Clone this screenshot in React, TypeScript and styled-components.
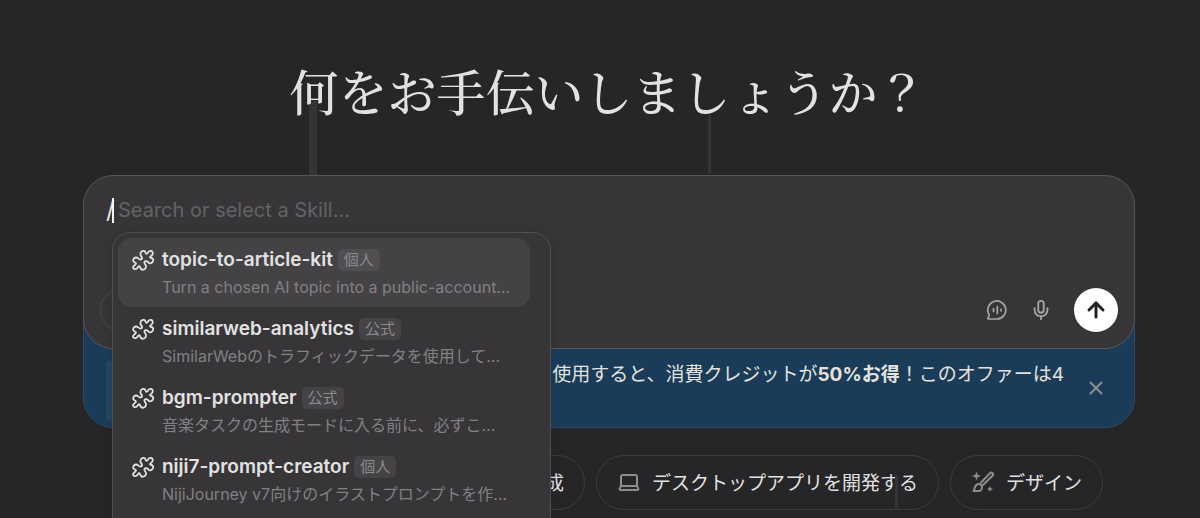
import React from "react";
import styled, { createGlobalStyle } from "styled-components";
import { ArrowUp, Laptop, Mic, X } from "lucide-react";

const Global = createGlobalStyle`
  * { box-sizing: border-box; }
  html, body { margin: 0; background: #262628; }
  body {
    color: #e2e2e2;
    font-family: Inter, "Noto Sans CJK JP", sans-serif;
  }
  button, input { font: inherit; color: inherit; }
`;

const Page = styled.main`
  position: relative;
  height: 100vh;
  overflow: hidden;
  padding: 60px 65px 0 83px;
`;

const Streak = styled.span<{ $left: number; $top: number; $width: number; $height: number }>`
  position: absolute;
  left: ${(p) => p.$left}px;
  top: ${(p) => p.$top}px;
  width: ${(p) => p.$width}px;
  height: ${(p) => p.$height}px;
  background: #343436;
`;

const Title = styled.h1`
  position: relative;
  margin: 0;
  height: 115px;
  padding-right: 2px;
  font: 500 49px/60px "Noto Serif CJK JP", "Noto Serif JP", "Noto Sans CJK JP", serif;
  text-align: center;
  white-space: nowrap;
`;

const Composer = styled.form`
  position: relative;
  z-index: 2;
  height: 174px;
  padding: 21px 16px 16px 22px;
  display: flex;
  flex-direction: column;
  justify-content: space-between;
  border: 1px solid #565658;
  border-radius: 30px;
  background: #373538;
`;

const InputRow = styled.label`
  display: flex;
  align-items: center;
  height: 26px;
  font-size: 20px;
`;

const Slash = styled.span`
  width: 6px;
  font-size: 24px;
  line-height: 26px;
`;

const Caret = styled.span`
  width: 2px;
  height: 25px;
  margin-right: 4px;
  background: #f4f4f4;
`;

const SkillInput = styled.input`
  flex: 1;
  min-width: 0;
  padding: 0;
  border: 0;
  outline: 0;
  background: transparent;
  &::placeholder { color: #636365; opacity: 1; }
`;

const Actions = styled.div`
  display: flex;
  align-items: center;
  gap: 20px;
`;

const AddButton = styled.button`
  width: 44px;
  height: 44px;
  margin: 0 auto 0 -6px;
  border: 1px solid #4a4a4c;
  border-radius: 50%;
  background: transparent;
`;

const IconButton = styled.button`
  display: grid;
  place-items: center;
  width: 24px;
  height: 24px;
  padding: 0;
  border: 0;
  background: transparent;
  color: #a5a5a5;
`;

const SendButton = styled(IconButton)`
  width: 44px;
  height: 44px;
  margin-left: 1px;
  border-radius: 50%;
  background: #fff;
  color: #242426;
`;

const Banner = styled.aside`
  display: flex;
  align-items: flex-start;
  height: 109px;
  margin-top: -30px;
  padding: 41px 29px 0 22px;
  border: 1px solid #2c4a60;
  border-radius: 0 0 30px 30px;
  background: #1b3c58;
  font-size: 19px;
  line-height: 27px;
`;

const BannerArt = styled.span`
  width: 60px;
  height: 60px;
  margin-right: auto;
  border-radius: 4px;
  background: #264660;
`;

const BannerText = styled.p`
  margin: 0 21px 0 0;
  white-space: nowrap;
  color: #e4e2de;
`;

const CloseButton = styled(IconButton)`
  width: 20px;
  margin-top: 15px;
  color: #8f9294;
`;

const Chips = styled.nav`
  display: flex;
  justify-content: flex-end;
  gap: 11px;
  padding: 27px 32px 0 0;
`;

const Chip = styled.button<{ $wide?: boolean }>`
  display: flex;
  align-items: center;
  justify-content: flex-end;
  gap: 11px;
  width: ${(p) => (p.$wide ? "469px" : "auto")};
  height: 55px;
  padding: 0 20px 2px;
  border: 1px solid #3d3d3f;
  border-radius: 28px;
  background: transparent;
  font-size: 19px;
  white-space: nowrap;
  svg { color: #8d8d8f; }
`;

const Menu = styled.ul`
  position: absolute;
  z-index: 3;
  top: 232px;
  bottom: -20px;
  left: 112px;
  width: 439px;
  margin: 0;
  padding: 5px 20px 0 5px;
  list-style: none;
  border: 1px solid #505052;
  border-radius: 18px;
  background: #373538;
  box-shadow: 0 0 12px rgba(0, 0, 0, 0.12);
`;

const Skill = styled.button<{ $active?: boolean }>`
  display: grid;
  grid-template-columns: 22px 1fr;
  grid-template-rows: 28px 26px;
  align-content: start;
  column-gap: 8px;
  align-items: center;
  width: 100%;
  height: 69px;
  padding: 8px 11px 0 14px;
  border: 0;
  border-radius: 14px;
  background: ${(p) => (p.$active ? "#444245" : "transparent")};
  text-align: left;
`;

const SkillHead = styled.span`
  display: flex;
  align-items: center;
  gap: 5px;
  font-size: 19px;
  font-weight: 600;
  line-height: 28px;
`;

const Tag = styled.span<{ $active?: boolean }>`
  padding: 0 6px;
  border-radius: 5px;
  background: ${(p) => (p.$active ? "#504e51" : "#454346")};
  color: #8b8b8d;
  font-size: 15px;
  font-weight: 400;
  line-height: 22px;
`;

const SkillNote = styled.span`
  grid-column: 2;
  color: #818183;
  font-size: 16px;
  line-height: 26px;
  white-space: nowrap;
`;

const PuzzleIcon = () => (
  <svg width="22" height="22" viewBox="0 0 22 22" fill="none" stroke="currentColor" strokeWidth="1.8" strokeLinejoin="round" aria-hidden="true">
    <path d="M8.500 4.500C9 1.500 13 1 13.500 3.500C14 5.500 15.500 4.800 16 3.500C17 1.500 19.500 1.300 20.400 2.800C21.500 5 20 6.500 18.500 7.500C17.500 8.500 18.500 9 19.500 9C21.800 9.500 21.500 12.500 20 13.500C18.500 14.800 17 14.500 16 13C14.500 11.500 12 12 12.500 14C12.800 15.500 14.500 16 14 18C13.500 20.500 10.500 21.500 9 20C8 19 8.500 17.800 7.500 17.300C6.300 17 6 18.500 5 19.300C3.500 20.700 1 20.300 1 18.300C1 16.500 4 16 4 14.500C4 13.500 1.500 13.500 1.200 11.800C1 10 2.500 8.300 4.500 8.500C6.500 8.800 7 11 8.800 10.500C10.800 10 10 8 9 7C8.200 6 8.200 5.500 8.500 4.500Z" />
  </svg>
);

const VoiceChatIcon = () => (
  <svg width="22" height="22" viewBox="0 0 22 22" fill="none" stroke="currentColor" strokeWidth="1.7" strokeLinecap="round" strokeLinejoin="round" aria-hidden="true">
    <path d="M3 15.500A9 9 0 1 1 11 20H2.500C2 20 1.700 19.500 2 19C3 17.500 3.300 16.500 3 15.500Z" />
    <path d="M7.500 9.500v3M11.300 7.500v7M15 10.200v1.600" />
  </svg>
);

const BrushIcon = () => (
  <svg width="24" height="24" viewBox="0 0 24 24" fill="none" stroke="currentColor" strokeWidth="2" strokeLinecap="round" strokeLinejoin="round" aria-hidden="true">
    <path d="M10 12.500 19 3.200a1.700 1.700 0 0 1 2.500 2.500L12 15" />
    <path d="M7 14a3.500 3.500 0 1 1 1 7H2.500c1.500-1.500.5-6 4.500-7z" />
    <path d="M5.500 1.500 6.700 4.800 10 6 6.700 7.200 5.500 10.500 4.300 7.200 1 6l3.300-1.200zM19 16l.9 2.100 2.100.9-2.100.9L19 22l-.9-2.100L16 19l2.100-.9z" fill="currentColor" strokeWidth="0" />
  </svg>
);

const skills = [
  { name: "topic-to-article-kit", tag: "個人", note: "Turn a chosen AI topic into a public-account…" },
  { name: "similarweb-analytics", tag: "公式", note: "SimilarWebのトラフィックデータを使用して…" },
  { name: "bgm-prompter", tag: "公式", note: "音楽タスクの生成モードに入る前に、必ずこ…" },
  { name: "niji7-prompt-creator", tag: "個人", note: "NijiJourney v7向けのイラストプロンプトを作…" },
];

export default function App() {
  return (
    <Page>
      <Global />
      <Streak $left={309} $top={101} $width={8} $height={74} />
      <Streak $left={708} $top={115} $width={3} $height={59} />
      <Streak $left={895} $top={475} $width={3} $height={33} />
      <Title>何をお手伝いしましょうか？</Title>
      <Composer onSubmit={(e) => e.preventDefault()}>
        <InputRow>
          <Slash>/</Slash>
          <Caret />
          <SkillInput placeholder="Search or select a Skill..." aria-label="Skill" />
        </InputRow>
        <Actions>
          <AddButton type="button" aria-label="Add" />
          <IconButton type="button" aria-label="Voice chat"><VoiceChatIcon /></IconButton>
          <IconButton type="button" aria-label="Dictate"><Mic size={22} /></IconButton>
          <SendButton aria-label="Send"><ArrowUp size={24} strokeWidth={3} /></SendButton>
        </Actions>
      </Composer>
      <Banner>
        <BannerArt />
        <BannerText>使用すると、消費クレジットが<b>50%お得</b>！このオファーは4</BannerText>
        <CloseButton type="button" aria-label="Close"><X size={22} strokeWidth={2} /></CloseButton>
      </Banner>
      <Chips>
        <Chip $wide>成</Chip>
        <Chip><Laptop size={24} />デスクトップアプリを開発する</Chip>
        <Chip><BrushIcon />デザイン</Chip>
      </Chips>
      <Menu>
        {skills.map((s, i) => (
          <li key={s.name}>
            <Skill type="button" $active={i === 0}>
              <PuzzleIcon />
              <SkillHead>{s.name}<Tag $active={i === 0}>{s.tag}</Tag></SkillHead>
              <SkillNote>{s.note}</SkillNote>
            </Skill>
          </li>
        ))}
      </Menu>
    </Page>
  );
}
